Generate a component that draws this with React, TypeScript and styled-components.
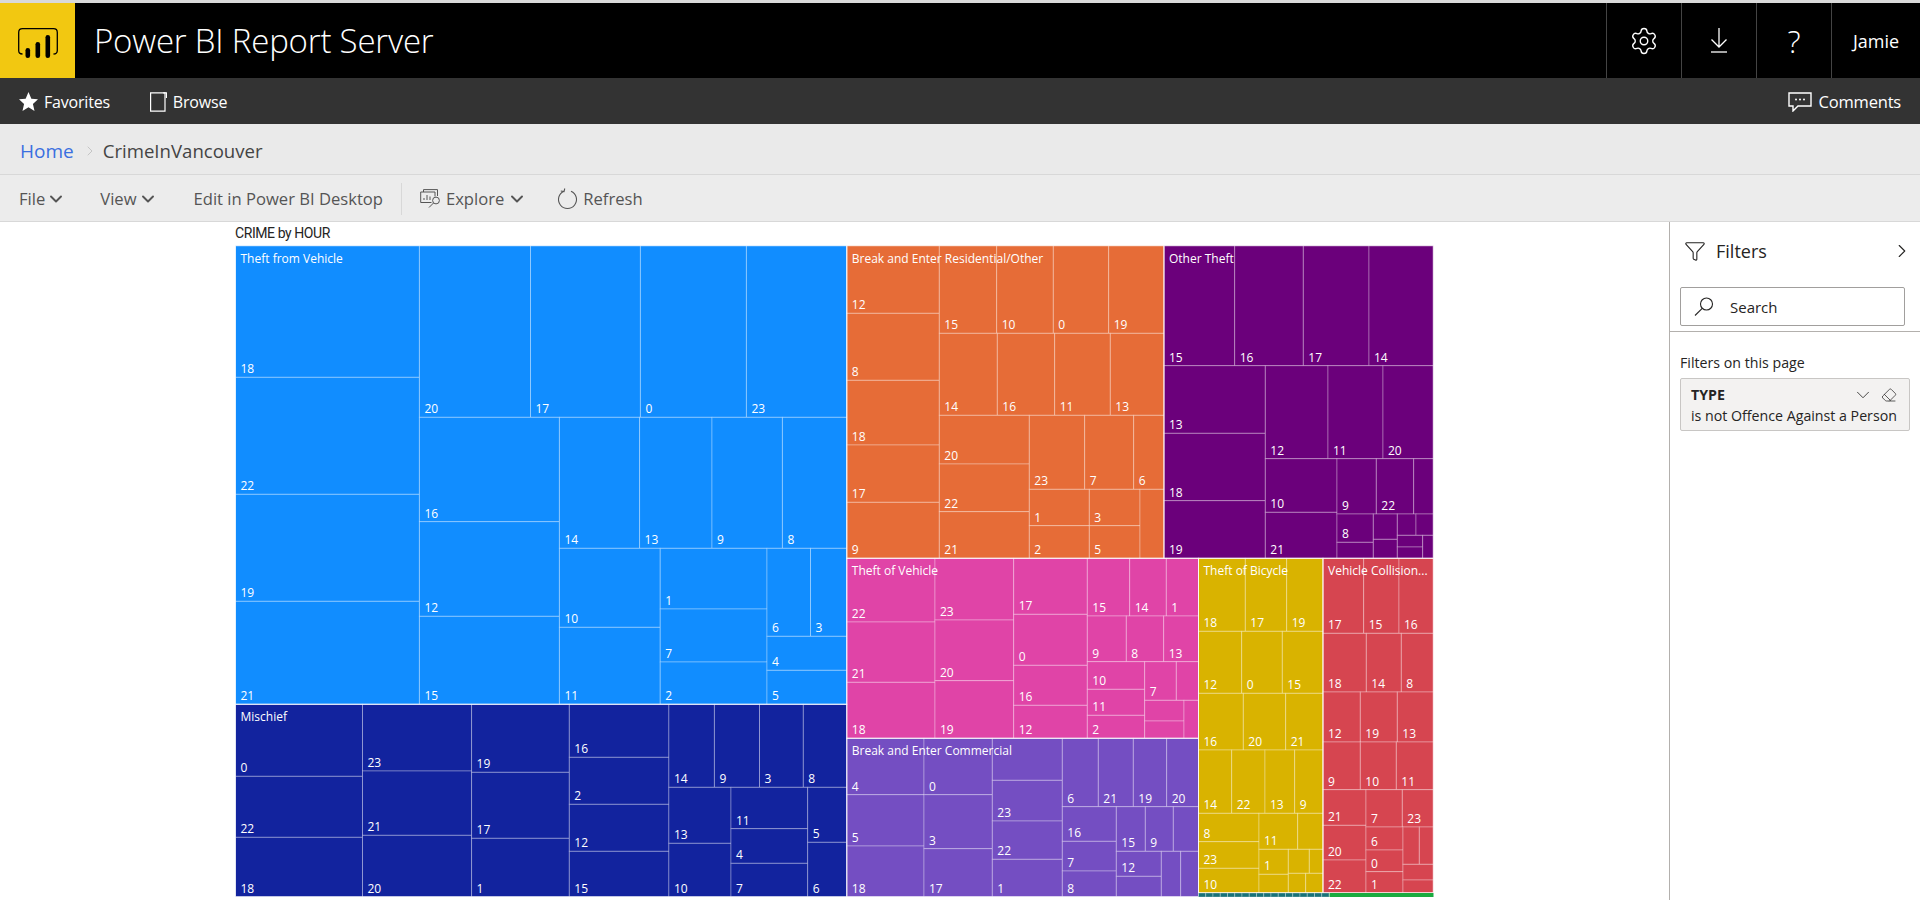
import React from "react";
import styled, { createGlobalStyle } from "styled-components";
import { ChevronDown, ChevronRight, Eraser, Funnel, Settings } from "lucide-react";

const FONT = `"Open Sans", "Noto Sans", sans-serif`;

interface Cell {
  x: number;
  y: number;
  w: number;
  h: number;
  label?: string;
}

interface Group {
  title: string;
  color: string;
  box: [number, number, number, number];
  cells: Cell[];
}

// stacked top to bottom inside one column
const col = (x0: number, x1: number, ys: number[], labels: string[]): Cell[] =>
  ys.slice(1).map((y, i) => ({ x: x0, y: ys[i], w: x1 - x0, h: y - ys[i], label: labels[i] }));

// side by side inside one row
const row = (y0: number, y1: number, xs: number[], labels: string[]): Cell[] =>
  xs.slice(1).map((x, i) => ({ x: xs[i], y: y0, w: x - xs[i], h: y1 - y0, label: labels[i] }));

const groups: Group[] = [
  {
    title: "Theft from Vehicle",
    color: "#118dff",
    box: [235.5, 245.7, 846.8, 704.3],
    cells: [
      ...col(235.5, 419.4, [245.7, 377.3, 494.3, 601.3, 704.3], ["18", "22", "19", "21"]),
      ...row(245.7, 417.3, [419.4, 530.5, 640.4, 746.4, 846.8], ["20", "17", "0", "23"]),
      ...col(419.4, 559.4, [417.3, 521.7, 616.3, 704.3], ["16", "12", "15"]),
      ...row(417.3, 548.3, [559.4, 639.6, 712, 782.4, 846.8], ["14", "13", "9", "8"]),
      ...col(559.4, 660.2, [548.3, 627.3, 704.3], ["10", "11"]),
      ...col(660.2, 767, [548.3, 609, 662, 704.3], ["1", "7", "2"]),
      ...row(548.3, 636.3, [767, 810.5, 846.8], ["6", "3"]),
      ...col(767, 846.8, [636.3, 670.3, 704.3], ["4", "5"]),
    ],
  },
  {
    title: "Mischief",
    color: "#12239e",
    box: [235.5, 704.3, 846.8, 896.7],
    cells: [
      ...col(235.5, 362.5, [704.3, 776.3, 837.3, 896.7], ["0", "22", "18"]),
      ...col(362.5, 471.6, [704.3, 771, 835.3, 896.7], ["23", "21", "20"]),
      ...col(471.6, 569.3, [704.3, 772.3, 838.3, 896.7], ["19", "17", "1"]),
      ...col(569.3, 668.9, [704.3, 757.3, 804.3, 851.3, 896.7], ["16", "2", "12", "15"]),
      ...row(704.3, 787.3, [668.9, 714.4, 759.5, 803.3, 846.8], ["14", "9", "3", "8"]),
      ...col(668.9, 731, [787.3, 843.3, 896.7], ["13", "10"]),
      ...col(731, 807.7, [787.3, 828.7, 863.3, 896.7], ["11", "4", "7"]),
      ...col(807.7, 846.8, [787.3, 842.3, 896.7], ["5", "6"]),
    ],
  },
  {
    title: "Break and Enter Residential/Other",
    color: "#e66c37",
    box: [846.8, 245.7, 1164, 558.3],
    cells: [
      ...col(846.8, 939.3, [245.7, 313.3, 380.3, 445, 502.3, 558.3], ["12", "8", "18", "17", "9"]),
      ...row(245.7, 333.3, [939.3, 996.7, 1053.3, 1108.7, 1164], ["15", "10", "0", "19"]),
      ...row(333.3, 415.3, [939.3, 997.3, 1054.7, 1110.3, 1164], ["14", "16", "11", "13"]),
      ...col(939.3, 1029.3, [415.3, 464, 511.7, 558.3], ["20", "22", "21"]),
      ...row(415.3, 489.3, [1029.3, 1084.7, 1133.7, 1164], ["23", "7", "6"]),
      ...col(1029.3, 1089.3, [489.3, 525.7, 558.3], ["1", "2"]),
      ...col(1089.3, 1140, [489.3, 525.7, 558.3], ["3", "5"]),
      ...col(1140, 1164, [489.3, 558.3], []),
    ],
  },
  {
    title: "Other Theft",
    color: "#6b007b",
    box: [1164, 245.7, 1433.3, 558.3],
    cells: [
      ...row(245.7, 365.7, [1164, 1234.7, 1303.3, 1369, 1433.3], ["15", "16", "17", "14"]),
      ...col(1164, 1265.3, [365.7, 433.3, 500.7, 558.3], ["13", "18", "19"]),
      ...row(365.7, 458.7, [1265.3, 1328, 1383, 1433.3], ["12", "11", "20"]),
      ...col(1265.3, 1337, [458.7, 512.3, 558.3], ["10", "21"]),
      ...row(458.7, 514, [1337, 1376.3, 1413.7, 1433.3], ["9", "22"]),
      ...col(1337, 1373.3, [514, 542.3, 558.3], ["8"]),
      ...col(1373.3, 1397.3, [514, 539.3, 558.3], []),
      ...row(514, 535.3, [1397.3, 1416, 1433.3], []),
      ...col(1397.3, 1422.7, [535.3, 547, 558.3], []),
      ...col(1422.7, 1433.3, [535.3, 558.3], []),
    ],
  },
  {
    title: "Theft of Vehicle",
    color: "#e044a7",
    box: [846.8, 558.3, 1198.5, 738.3],
    cells: [
      ...col(846.8, 935, [558.3, 622, 682.3, 738.3], ["22", "21", "18"]),
      ...col(935, 1013.7, [558.3, 620, 680.7, 738.3], ["23", "20", "19"]),
      ...col(1013.7, 1087.3, [558.3, 614.3, 665.3, 705.3, 738.3], ["17", "0", "16", "12"]),
      ...row(558.3, 616, [1087.3, 1129.7, 1166.3, 1198.5], ["15", "14", "1"]),
      ...row(616, 661.7, [1087.3, 1126.3, 1163.7, 1198.5], ["9", "8", "13"]),
      ...col(1087.3, 1144.7, [661.7, 689.3, 715.3, 738.3], ["10", "11", "2"]),
      ...row(661.7, 700.3, [1144.7, 1176.3, 1198.5], ["7"]),
      ...col(1144.7, 1184, [700.3, 721, 738.3], []),
      ...col(1184, 1198.5, [700.3, 738.3], []),
    ],
  },
  {
    title: "Break and Enter Commercial",
    color: "#744ec2",
    box: [846.8, 738.3, 1198.5, 896.7],
    cells: [
      ...col(846.8, 924, [738.3, 794.7, 846, 896.7], ["4", "5", "18"]),
      ...col(924, 992.3, [738.3, 794.7, 848.7, 896.7], ["0", "3", "17"]),
      ...col(992.3, 1062.3, [738.3, 780.3, 821, 859.3, 896.7], ["", "23", "22", "1"]),
      ...row(738.3, 806.7, [1062.3, 1098.3, 1133.3, 1166.7, 1198.5], ["6", "21", "19", "20"]),
      ...col(1062.3, 1116.3, [806.7, 841.3, 871, 896.7], ["16", "7", "8"]),
      ...row(806.7, 851.3, [1116.3, 1145.3, 1173.3, 1198.5], ["15", "9"]),
      ...col(1116.3, 1161.3, [851.3, 876.3, 896.7], ["12"]),
      ...row(851.3, 896.7, [1161.3, 1180.7, 1198.5], []),
    ],
  },
  {
    title: "Theft of Bicycle",
    color: "#d9b300",
    box: [1198.5, 558.3, 1323, 892.7],
    cells: [
      ...row(558.3, 631.3, [1198.5, 1245.3, 1286.7, 1323], ["18", "17", "19"]),
      ...row(631.3, 693.3, [1198.5, 1241.7, 1282.3, 1323], ["12", "0", "15"]),
      ...row(693.3, 750, [1198.5, 1243.3, 1285.7, 1323], ["16", "20", "21"]),
      ...row(750, 813.3, [1198.5, 1231.7, 1265, 1294.7, 1323], ["14", "22", "13", "9"]),
      ...col(1198.5, 1259, [813.3, 841.7, 868.3, 892.7], ["8", "23", "10"]),
      ...row(813.3, 849.3, [1259, 1297.7, 1323], ["11"]),
      ...col(1259, 1288.3, [849.3, 874.3, 892.7], ["1"]),
      ...row(849.3, 873.3, [1288.3, 1309.3, 1323], []),
      ...row(873.3, 892.7, [1288.3, 1305.7, 1323], []),
    ],
  },
  {
    title: "Vehicle Collision...",
    color: "#d64550",
    box: [1323, 558.3, 1433.3, 892.7],
    cells: [
      ...row(558.3, 633.3, [1323, 1363.7, 1399, 1433.3], ["17", "15", "16"]),
      ...row(633.3, 692, [1323, 1366.3, 1401.3, 1433.3], ["18", "14", "8"]),
      ...row(692, 742, [1323, 1360.3, 1397.3, 1433.3], ["12", "19", "13"]),
      ...row(742, 789.7, [1323, 1360.3, 1396.3, 1433.3], ["9", "10", "11"]),
      ...col(1323, 1366, [789.7, 825.3, 860, 892.7], ["21", "20", "22"]),
      ...row(789.7, 827, [1366, 1402.3, 1433.3], ["7", "23"]),
      ...col(1366, 1403, [827, 850, 871.7, 892.7], ["6", "0", "1"]),
      ...row(827, 864.3, [1403, 1419.3, 1433.3], []),
      ...col(1403, 1433.3, [864.3, 880, 892.7], []),
    ],
  },
];

// the tiny tail of the treemap, too thin for labels
const tealTicks = Array.from({ length: 18 }, (_, i) => 1198.5 + i * 7.25);

const GlobalStyle = createGlobalStyle`
  html, body {
    margin: 0;
    padding: 0;
    background: #fff;
    font-family: ${FONT};
    overflow: hidden;
  }
`;

const Page = styled.div`
  width: 1920px;
  height: 900px;
  display: flex;
  flex-direction: column;
  border-top: 3px solid #d9d9d9;
  box-sizing: border-box;
  overflow: hidden;
`;

const TopBar = styled.header`
  height: 75px;
  flex: none;
  background: #000;
  color: #fff;
  display: flex;
  align-items: center;
`;

const LogoBox = styled.div`
  width: 75px;
  height: 100%;
  box-sizing: border-box;
  padding-top: 5px;
  background: #f2c811;
  display: flex;
  align-items: center;
  justify-content: center;
`;

const AppTitle = styled.div`
  margin-left: 19px;
  font-size: 33px;
  font-weight: 300;
  letter-spacing: -0.2px;
  flex: 1;
`;

const TopCell = styled.div<{ $wide?: boolean; $big?: boolean }>`
  width: ${props => (props.$wide ? "89px" : "75px")};
  height: 100%;
  box-sizing: border-box;
  border-left: 1px solid #444;
  display: flex;
  align-items: center;
  justify-content: center;
  font-size: ${props => (props.$big ? "31px" : "18px")};
  font-weight: ${props => (props.$big ? 300 : 400)};
`;

const NavBar = styled.nav`
  height: 46px;
  flex: none;
  background: #333;
  color: #fff;
  display: flex;
  align-items: center;
  padding: 1px 19px 0;
  box-sizing: border-box;
  font-size: 16px;
  letter-spacing: -0.2px;
`;

const NavItem = styled.div<{ $end?: boolean }>`
  display: flex;
  align-items: center;
  gap: 6px;
  margin-right: 40px;
  margin-left: ${props => (props.$end ? "auto" : "0")};
  ${props => props.$end && "margin-right: 0; gap: 7px; font-size: 16.5px;"}
`;

const Crumbs = styled.div`
  height: 51px;
  flex: none;
  background: #eaeaea;
  border-bottom: 1px solid #d8d8d8;
  box-sizing: border-box;
  display: flex;
  align-items: center;
  padding: 3px 0 0 20px;
  font-size: 18.6px;
  color: #444;
`;

const HomeLink = styled.span`
  color: #3a6fe0;
  font-size: 19px;
`;

const CrumbGap = styled.span`
  display: flex;
  margin: 0 5px 0 8px;
  color: #bbb;
`;

const ToolBar = styled.div`
  height: 47px;
  flex: none;
  background: #ececec;
  border-bottom: 1px solid #d8d8d8;
  box-sizing: border-box;
  display: flex;
  align-items: center;
  padding: 1px 0 0 19px;
  font-size: 16.6px;
  color: #555;
`;

const ToolItem = styled.div<{ $gap: number }>`
  display: flex;
  align-items: center;
  gap: 5px;
  margin-right: ${props => props.$gap}px;
`;

const Caret = styled(ChevronDown)<{ $shift?: number }>`
  margin-left: ${props => props.$shift ?? -4}px;
`;

const ToolDivider = styled.div`
  width: 1px;
  height: 32px;
  background: #d8d8d8;
  margin-right: 18px;
`;

const Content = styled.main`
  flex: 1;
  min-height: 0;
  display: flex;
`;

const ReportArea = styled.section`
  flex: 1;
  padding-left: 235px;
`;

const ChartTitle = styled.div`
  height: 23px;
  line-height: 22px;
  font-family: Roboto, sans-serif;
  font-size: 14px;
  letter-spacing: -0.42px;
  color: #252423;
`;

const Treemap = styled.svg`
  display: block;
`;

const CellRect = styled.rect`
  stroke: rgba(255, 255, 255, 0.3);
  stroke-width: 1;
`;

const GroupOutline = styled.rect`
  fill: none;
  stroke: rgba(255, 255, 255, 0.65);
  stroke-width: 1;
`;

const CellLabel = styled.text`
  fill: #fff;
  font-family: ${FONT};
  font-size: 12px;
`;

const FilterPane = styled.aside`
  width: 251px;
  flex: none;
  box-sizing: border-box;
  border-left: 1px solid #b3b0ad;
  color: #252423;
`;

const PaneHead = styled.div`
  height: 52px;
  display: flex;
  align-items: center;
  padding: 6px 7px 0 14px;
  box-sizing: border-box;
  gap: 10px;
  font-size: 18px;
`;

const PaneTitle = styled.span`
  flex: 1;
`;

const SearchBox = styled.div`
  margin: 13px 15px 5px 10px;
  height: 39px;
  box-sizing: border-box;
  border: 1px solid #a19f9d;
  border-radius: 2px;
  display: flex;
  align-items: center;
  gap: 16px;
  padding-left: 13px;
  font-size: 15px;
`;

const PaneBody = styled.div`
  border-top: 1px solid #b3b0ad;
  padding: 22px 10px 0;
`;

const SectionLabel = styled.div`
  font-size: 14.2px;
  line-height: 18px;
  margin-bottom: 6px;
`;

const FilterCard = styled.div`
  height: 53px;
  box-sizing: border-box;
  background: #f3f2f1;
  border: 1px solid #c8c6c4;
  border-radius: 2px;
  padding: 5px 12px 0 10px;
  font-size: 14.2px;
  line-height: 20px;
  white-space: nowrap;
`;

const CardHead = styled.div`
  display: flex;
  align-items: center;
  font-weight: 700;
  gap: 7px;
`;

const CardName = styled.span`
  flex: 1;
`;

const PowerBiLogo = () => (
  <svg width="40" height="30" viewBox="0 0 40 30" fill="none">
    <path
      d="M4.5 26 C1.5 26 0.7 24.5 0.7 22.5 V4.5 C0.7 2 2 0.7 4.5 0.7 H35.5 C38 0.7 39.3 2 39.3 4.5 V22.5 C39.3 24.5 38.5 26 35.5 26"
      stroke="#000"
      strokeWidth="1.3"
    />
    <rect x="7.5" y="20" width="4.6" height="10" rx="2.3" fill="#000" />
    <rect x="17.5" y="14" width="4.6" height="16" rx="2.3" fill="#000" />
    <rect x="27.5" y="7" width="4.6" height="23" rx="2.3" fill="#000" />
  </svg>
);

const DownloadArrow = () => (
  <svg width="18" height="25" viewBox="0 0 18 25" fill="none" stroke="#fff" strokeWidth="1.3">
    <path d="M9 0 V19 M1.5 11.5 L9 19 L16.5 11.5" />
    <path d="M1 24 H17" />
  </svg>
);

const StarIcon = () => (
  <svg width="19" height="19" viewBox="0 0 24 24" fill="#fff">
    <path d="M12 0 L15.6 8.6 L24 9.3 L17.6 15.2 L19.6 24 L12 19.3 L4.4 24 L6.4 15.2 L0 9.3 L8.4 8.6 Z" />
  </svg>
);

const BrowseIcon = () => (
  <svg width="17" height="20" viewBox="0 0 17 20" fill="none" stroke="#fff" strokeWidth="1.2">
    <path d="M0.6 0.8 H15 V19.2 H0.6 Z" />
    <path d="M13.2 0.8 H16.4 V6" />
  </svg>
);

const CommentIcon = () => (
  <svg width="24" height="20" viewBox="0 0 24 20" fill="none" stroke="#fff" strokeWidth="1.4">
    <path d="M1 1 H23 V14 H10 L5 19 V14 H1 Z" />
    <circle cx="8" cy="7.5" r="1" fill="#fff" stroke="none" />
    <circle cx="12" cy="7.5" r="1" fill="#fff" stroke="none" />
    <circle cx="16" cy="7.5" r="1" fill="#fff" stroke="none" />
  </svg>
);

const ExploreIcon = () => (
  <svg width="21" height="19" viewBox="0 0 21 19" fill="none" stroke="#555" strokeWidth="1">
    <path d="M3.5 3 V0.6 H17.5 V7" />
    <path d="M11.5 13.5 H0.7 V3 H15 V7.5" />
    <path d="M4 11 V9 M7 11 V6 M10 11 V7.5" />
    <circle cx="16" cy="11.5" r="3.4" />
    <path d="M13.5 14 L9 18.5" />
  </svg>
);

const RefreshIcon = () => (
  <svg width="21" height="22" viewBox="0 0 21 22" fill="none" stroke="#555" strokeWidth="1.1">
    <path d="M7 3.2 A9 9 0 1 0 14 3.2" />
    <path d="M7.8 0.5 L7 3.6 L3.8 3" />
  </svg>
);

const SearchGlyph = () => (
  <svg width="20" height="20" viewBox="0 0 20 20" fill="none" stroke="#252423" strokeWidth="1.1">
    <circle cx="12.5" cy="7" r="6" />
    <path d="M8.2 11.4 L1 18.5" />
  </svg>
);

const App = () => (
  <Page>
    <GlobalStyle />
    <TopBar>
      <LogoBox>
        <PowerBiLogo />
      </LogoBox>
      <AppTitle>Power BI Report Server</AppTitle>
      <TopCell>
        <Settings size={30} strokeWidth={1.1} />
      </TopCell>
      <TopCell>
        <DownloadArrow />
      </TopCell>
      <TopCell $big>?</TopCell>
      <TopCell $wide>Jamie</TopCell>
    </TopBar>
    <NavBar>
      <NavItem>
        <StarIcon />
        Favorites
      </NavItem>
      <NavItem>
        <BrowseIcon />
        Browse
      </NavItem>
      <NavItem $end>
        <CommentIcon />
        Comments
      </NavItem>
    </NavBar>
    <Crumbs>
      <HomeLink>Home</HomeLink>
      <CrumbGap>
        <ChevronRight size={16} strokeWidth={1.2} />
      </CrumbGap>
      CrimeInVancouver
    </Crumbs>
    <ToolBar>
      <ToolItem $gap={34}>
        File
        <Caret size={20} strokeWidth={2.3} />
      </ToolItem>
      <ToolItem $gap={36}>
        View
        <Caret size={20} strokeWidth={2.3} />
      </ToolItem>
      <ToolItem $gap={18}>Edit in Power BI Desktop</ToolItem>
      <ToolDivider />
      <ToolItem $gap={30}>
        <ExploreIcon />
        Explore
        <Caret size={20} strokeWidth={2.3} $shift={-2} />
      </ToolItem>
      <ToolItem $gap={0}>
        <RefreshIcon />
        Refresh
      </ToolItem>
    </ToolBar>
    <Content>
      <ReportArea>
        <ChartTitle>CRIME by HOUR</ChartTitle>
        <Treemap width="1199" height="653" viewBox="235 245 1199 653">
          {groups.map(group => (
            <g key={group.title}>
              {group.cells.map((cell, i) => (
                <g key={i}>
                  <CellRect x={cell.x} y={cell.y} width={cell.w} height={cell.h} fill={group.color} />
                  {cell.label && (
                    <CellLabel x={cell.x + 5} y={cell.y + cell.h - 4}>
                      {cell.label}
                    </CellLabel>
                  )}
                </g>
              ))}
            </g>
          ))}
          {groups.map(group => (
            <g key={group.title}>
              <GroupOutline
                x={group.box[0]}
                y={group.box[1]}
                width={group.box[2] - group.box[0]}
                height={group.box[3] - group.box[1]}
              />
              <CellLabel x={group.box[0] + 5} y={group.box[1] + 17}>
                {group.title}
              </CellLabel>
            </g>
          ))}
          {tealTicks.map(x => (
            <CellRect key={x} x={x} y="893" width="7.25" height="4" fill="#197278" />
          ))}
          <rect x="1329.5" y="893" width="104" height="4" fill="#1aab40" />
        </Treemap>
      </ReportArea>
      <FilterPane>
        <PaneHead>
          <Funnel size={22} strokeWidth={1.2} />
          <PaneTitle>Filters</PaneTitle>
          <ChevronRight size={22} strokeWidth={1.2} />
        </PaneHead>
        <SearchBox>
          <SearchGlyph />
          Search
        </SearchBox>
        <PaneBody>
          <SectionLabel>Filters on this page</SectionLabel>
          <FilterCard>
            <CardHead>
              <CardName>TYPE</CardName>
              <ChevronDown size={22} strokeWidth={0.9} />
              <Eraser size={16} strokeWidth={1.1} />
            </CardHead>
            is not Offence Against a Person
          </FilterCard>
        </PaneBody>
      </FilterPane>
    </Content>
  </Page>
);

export default App;
